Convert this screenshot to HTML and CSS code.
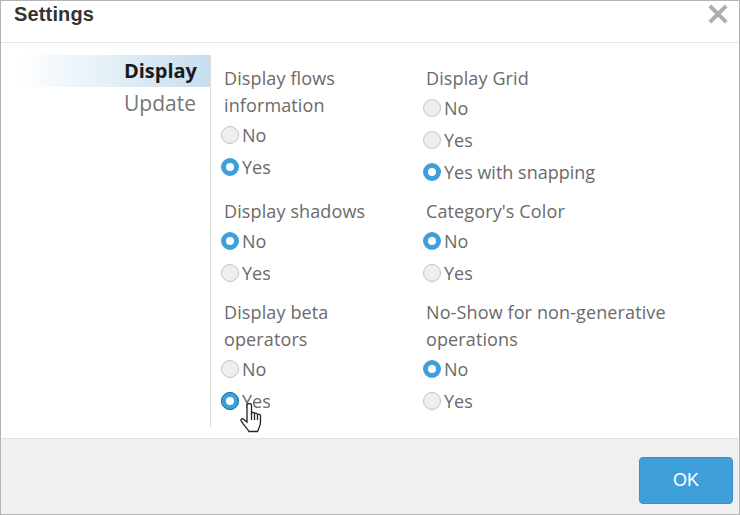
FILE: index.html
```html
<!DOCTYPE html>
<html lang="en">

<head>
    <meta charset="UTF-8">
    <meta name="viewport" content="width=device-width, initial-scale=1.0">
    <title>Settings</title>
    <link rel="stylesheet" href="styles.css">
</head>

<body>
    <div class="dialog">
        <header class="dialog-header">
            <h1>Settings</h1>
            <svg class="close" width="20" height="20" viewBox="0 0 20 20">
                <path d="M1.800 1.800 18.200 18.200M18.200 1.800 1.800 18.200" />
            </svg>
        </header>

        <main class="dialog-body">
            <nav class="tabs">
                <div class="tab active">Display</div>
                <div class="tab">Update</div>
            </nav>

            <div class="options">
                <section class="group">
                    <h2>Display flows information</h2>
                    <label class="option"><input type="radio" name="flows">No</label>
                    <label class="option"><input type="radio" name="flows" checked>Yes</label>
                </section>
                <section class="group">
                    <h2>Display Grid</h2>
                    <label class="option"><input type="radio" name="grid">No</label>
                    <label class="option"><input type="radio" name="grid">Yes</label>
                    <label class="option"><input type="radio" name="grid" checked>Yes with snapping</label>
                </section>
                <section class="group">
                    <h2>Display shadows</h2>
                    <label class="option"><input type="radio" name="shadows" checked>No</label>
                    <label class="option"><input type="radio" name="shadows">Yes</label>
                </section>
                <section class="group">
                    <h2>Category's Color</h2>
                    <label class="option"><input type="radio" name="color" checked>No</label>
                    <label class="option"><input type="radio" name="color">Yes</label>
                </section>
                <section class="group">
                    <h2>Display beta operators</h2>
                    <label class="option"><input type="radio" name="beta">No</label>
                    <label class="option hover">
                        <input class="focused" type="radio" name="beta" checked>Yes
                        <!-- mouse pointer -->
                        <svg class="pointer" width="23" height="31" viewBox="0 0 23 31">
                            <path d="M7 2.500c0-1.300 1-2 2.300-2s2.200.7 2.200 2V10c.8-1 2.800-.8 3 .6.8-.9 2.800-.6 3 .9.9-.7 3-.3 3 1.300v6c0 4-1.500 6-3 9.700H9c-1.500-3-6-7-7.800-10.500-.8-1.500.8-3 2.500-1.800L7 19Z" />
                            <path d="M11.500 10v7M14.500 10.600V17M17.500 11.500V17" />
                        </svg>
                    </label>
                </section>
                <section class="group">
                    <h2>No-Show for non-generative operations</h2>
                    <label class="option"><input type="radio" name="noshow" checked>No</label>
                    <label class="option"><input type="radio" name="noshow">Yes</label>
                </section>
            </div>
        </main>

        <footer class="dialog-footer">
            <button class="ok">OK</button>
        </footer>
    </div>
</body>

</html>
```

FILE: styles.css
```css
* {
    box-sizing: border-box;
}

html,
body {
    height: 100%;
}

body {
    margin: 0;
    background-color: #ffffff;
    color: #6a6a6a;
    font-family: "Open Sans", Arial, sans-serif;
    overflow: hidden;
}

.dialog {
    height: 515px;
    display: flex;
    flex-direction: column;
    border: 1px solid #b4b4b4;
}

.dialog-header {
    height: 42px;
    flex: none;
    display: flex;
    justify-content: space-between;
    align-items: flex-start;
    padding: 0 11px 0 13px;
    border-bottom: 1px solid #e6e6e6;
}

.dialog-header h1 {
    margin: 0;
    color: #333333;
    font-family: "Liberation Sans", Arial, sans-serif;
    font-size: 20px;
    font-weight: bold;
    letter-spacing: 0.15px;
    line-height: 26px;
}

.close {
    margin-top: 3px;
}

.close path {
    fill: none;
    stroke: #aeaeae;
    stroke-width: 4;
}

.dialog-body {
    flex: 1;
    display: flex;
    align-items: flex-start;
    padding: 12px 0 0;
}

.tabs {
    width: 209px;
    flex: none;
    padding-left: 16px;
}

.tab {
    height: 32px;
    padding-right: 14px;
    text-align: right;
    font-size: 21px;
    line-height: 32px;
    color: #777777;
}

.tab.active {
    padding-right: 13px;
    background: linear-gradient(to right, #ffffff, #c6deef);
    color: #1a1a1a;
    font-size: 20px;
    font-weight: bold;
}

.options {
    width: 470px;
    display: grid;
    grid-template-columns: 202px 1fr;
    row-gap: 10px;
    padding: 10px 0 10px 13px;
    border-left: 1px solid #dcdcdc;
}

.group h2 {
    margin: 0;
    font-size: 18px;
    font-weight: normal;
    letter-spacing: 0.12px;
    line-height: 27px;
    max-width: 180px;
}

.group:nth-child(even) h2 {
    max-width: 260px;
}

.option {
    position: relative;
    height: 32px;
    display: flex;
    align-items: center;
    margin-left: -3px;
    font-size: 18px;
}

.option input {
    appearance: none;
    width: 18px;
    height: 18px;
    margin: 0 3px 0 0;
    flex: none;
    border: 1px solid #c4c4c4;
    border-radius: 50%;
    background-color: #eeeeee;
}

.option input:checked {
    border: 5px solid #3f9fdb;
    background-color: #ffffff;
}

.option input.focused {
    outline: 1.500px solid #1f6f9f;
    outline-offset: -1.500px;
}

.pointer {
    position: absolute;
    left: 19px;
    top: 18px;
}

.pointer path {
    fill: #ffffff;
    stroke: #222222;
    stroke-width: 1.300;
}

.dialog-footer {
    height: 76px;
    flex: none;
    display: flex;
    justify-content: flex-end;
    align-items: flex-start;
    padding: 18px 6px 0 0;
    background-color: #f0f0f0;
    border-top: 1px solid #e2e2e2;
}

.ok {
    width: 94px;
    height: 47px;
    border: 1px solid #3a8fc4;
    border-radius: 4px;
    background-color: #3f9fdb;
    color: #ffffff;
    font-family: "Liberation Sans", Arial, sans-serif;
    font-size: 18px;
}
```
